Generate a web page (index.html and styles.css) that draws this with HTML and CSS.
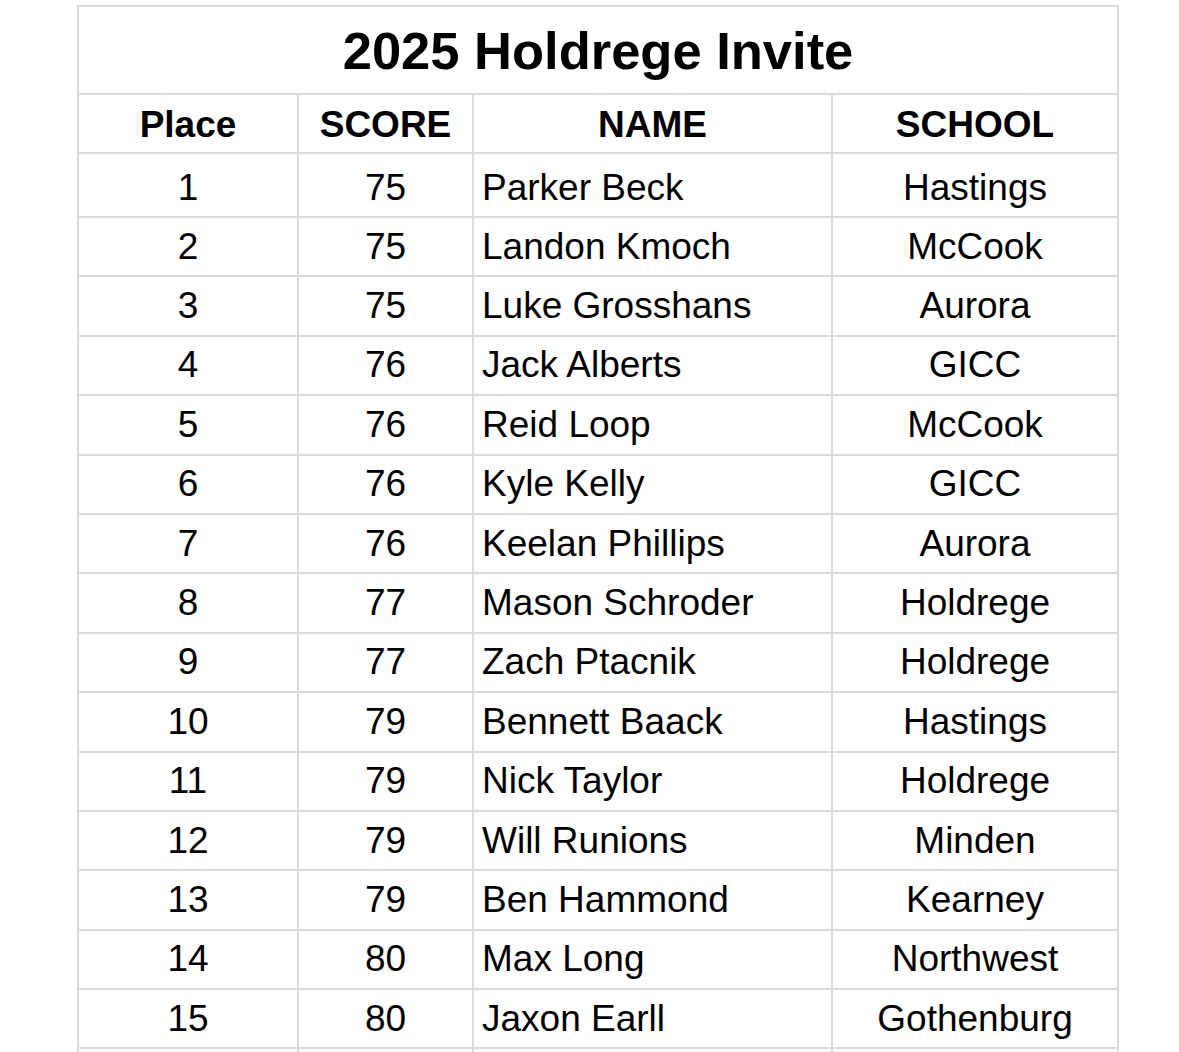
FILE: index.html
```html
<!DOCTYPE html>
<html lang="en">
<head>
<meta charset="utf-8">
<title>2025 Holdrege Invite</title>
<link rel="stylesheet" href="styles.css">
</head>
<body>
<table class="results">
  <colgroup>
    <col class="c-place">
    <col class="c-score">
    <col class="c-name">
    <col class="c-school">
  </colgroup>
  <thead>
    <tr class="title-row"><th colspan="4" class="title">2025 Holdrege Invite</th></tr>
    <tr class="head-row">
      <th>Place</th><th>SCORE</th><th>NAME</th><th>SCHOOL</th>
    </tr>
  </thead>
  <tbody>
    <tr class="first"><td class="ctr">1</td><td class="ctr">75</td><td class="name">Parker Beck</td><td class="ctr">Hastings</td></tr>
    <tr><td class="ctr">2</td><td class="ctr">75</td><td class="name">Landon Kmoch</td><td class="ctr">McCook</td></tr>
    <tr><td class="ctr">3</td><td class="ctr">75</td><td class="name">Luke Grosshans</td><td class="ctr">Aurora</td></tr>
    <tr><td class="ctr">4</td><td class="ctr">76</td><td class="name">Jack Alberts</td><td class="ctr">GICC</td></tr>
    <tr><td class="ctr">5</td><td class="ctr">76</td><td class="name">Reid Loop</td><td class="ctr">McCook</td></tr>
    <tr><td class="ctr">6</td><td class="ctr">76</td><td class="name">Kyle Kelly</td><td class="ctr">GICC</td></tr>
    <tr><td class="ctr">7</td><td class="ctr">76</td><td class="name">Keelan Phillips</td><td class="ctr">Aurora</td></tr>
    <tr><td class="ctr">8</td><td class="ctr">77</td><td class="name">Mason Schroder</td><td class="ctr">Holdrege</td></tr>
    <tr><td class="ctr">9</td><td class="ctr">77</td><td class="name">Zach Ptacnik</td><td class="ctr">Holdrege</td></tr>
    <tr><td class="ctr">10</td><td class="ctr">79</td><td class="name">Bennett Baack</td><td class="ctr">Hastings</td></tr>
    <tr><td class="ctr">11</td><td class="ctr">79</td><td class="name">Nick Taylor</td><td class="ctr">Holdrege</td></tr>
    <tr><td class="ctr">12</td><td class="ctr">79</td><td class="name">Will Runions</td><td class="ctr">Minden</td></tr>
    <tr><td class="ctr">13</td><td class="ctr">79</td><td class="name">Ben Hammond</td><td class="ctr">Kearney</td></tr>
    <tr><td class="ctr">14</td><td class="ctr">80</td><td class="name">Max Long</td><td class="ctr">Northwest</td></tr>
    <tr><td class="ctr">15</td><td class="ctr">80</td><td class="name">Jaxon Earll</td><td class="ctr">Gothenburg</td></tr>
    <tr class="cut"><td></td><td></td><td></td><td></td></tr>
  </tbody>
</table>
</body>
</html>
```
FILE: styles.css
```css
html, body {
  margin: 0;
  padding: 0;
  background: #ffffff;
}

body {
  padding: 5px 0 0 77px;
  font-family: "Liberation Sans", Arial, sans-serif;
  color: #000000;
  overflow: hidden;
}

.results {
  border-collapse: collapse;
  table-layout: fixed;
  width: 1040px;
}

.c-place { width: 220px; }
.c-score { width: 175px; }
.c-name { width: 359px; }
.c-school { width: 286px; }

.results th,
.results td {
  border: 2px solid #dadada;
  padding: 0;
  vertical-align: middle;
  white-space: nowrap;
  overflow: hidden;
}

.title-row { height: 88px; }

.title {
  font-size: 52.5px;
  font-weight: bold;
  text-align: center;
  padding-top: 2px;
}

.head-row { height: 59px; }

.head-row th {
  font-size: 37px;
  font-weight: bold;
  text-align: center;
  padding-top: 2px;
}

.results tbody tr { height: 59.4px; }

.results tbody tr.first { height: 64px; }

.results tbody tr.first td { padding-top: 6px; }

.results td {
  font-size: 37px;
  font-weight: normal;
}

.ctr { text-align: center; }

.name {
  text-align: left;
  padding-left: 8px !important;
}

.results tbody tr.cut { height: 40px; }
```
